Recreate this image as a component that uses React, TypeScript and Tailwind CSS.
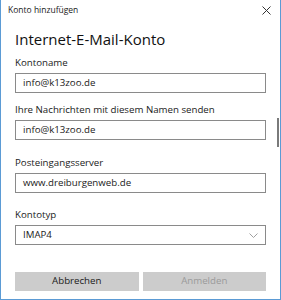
import React from "react";

export default function App() {
  const font = { fontFamily: '"Open Sans", "Noto Sans", sans-serif' };
  const label = "text-[9.7px] leading-[10px] h-[10px]";
  const input = "mt-[5px] h-[20px] border-[1.5px] border-[#8a8a8a] flex items-center pl-[7px] text-[9.7px]";
  return (
    <div className="w-[281px] h-[300px] bg-white border-l border-r border-b border-[#5b9bd5] flex flex-col text-[#1a1a1a]" style={font}>
      <div className="flex items-center justify-between h-[20px] pl-[7px] pr-[9px] pt-[1px]">
        <span className="text-[8.5px] leading-none">Konto hinzufügen</span>
        <svg width="9" height="9" viewBox="0 0 9 9" className="text-[#333]">
          <path d="M0.5 0.5 L8.5 8.5 M8.5 0.5 L0.5 8.5" stroke="currentColor" strokeWidth="1" />
        </svg>
      </div>
      <div className="flex pl-[14px]">
        <div className="flex-1">
          <div className="text-[15px] leading-[15px] h-[15px] mt-[12px] text-[#111]">Internet-E-Mail-Konto</div>
          <div className={`${label} mt-[11px]`}>Kontoname</div>
          <div className={input}>info@k13zoo.de</div>
          <div className={`${label} mt-[12px]`}>Ihre Nachrichten mit diesem Namen senden</div>
          <div className={input}>info@k13zoo.de</div>
          <div className={`${label} mt-[18px]`}>Posteingangsserver</div>
          <div className={input}>www.dreiburgenweb.de</div>
          <div className={`${label} mt-[17px]`}>Kontotyp</div>
          <div className={`${input} justify-between pr-[7px]`}>
            <span>IMAP4</span>
            <svg width="9" height="5" viewBox="0 0 9 5">
              <path d="M0.5 0.5 L4.5 4.5 L8.5 0.5" stroke="#a0a0a0" strokeWidth="1" fill="none" />
            </svg>
          </div>
        </div>
        <div className="w-[2px] ml-[11px] mr-[1px] pt-[98px]">
          <div className="w-[2px] h-[29px] bg-[#7a7a7a]" />
        </div>
      </div>
      <div className="flex gap-[4px] px-[14px] mt-auto mb-[8px]">
        <div className="flex-1 h-[19px] bg-[#cccccc] flex items-center justify-center text-[9.7px] text-[#1a1a1a]">Abbrechen</div>
        <div className="flex-1 h-[19px] bg-[#cccccc] flex items-center justify-center text-[9.7px] text-[#9a9a9a]">Anmelden</div>
      </div>
    </div>
  );
}
